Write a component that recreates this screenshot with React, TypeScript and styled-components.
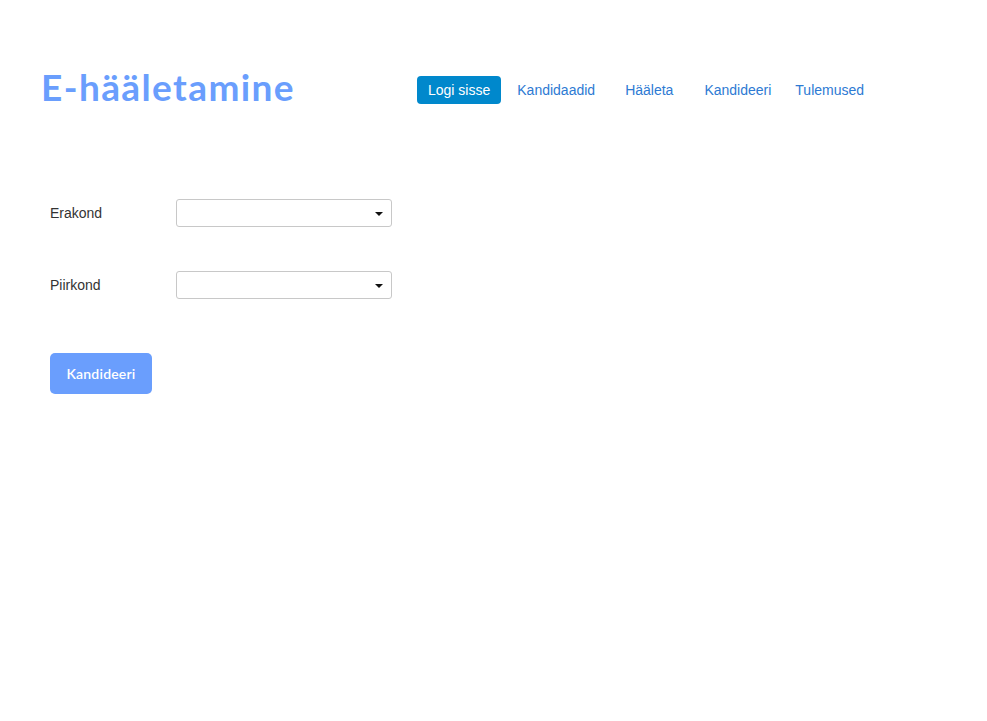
import React from 'react';
import styled, {createGlobalStyle} from 'styled-components';

const GlobalStyle = createGlobalStyle`
    html, body {
        margin: 0;
        padding: 0;
        background: #fff;
    }
    body {
        font-family: 'Liberation Sans', Arial, sans-serif;
        font-size: 14px;
        color: #333;
    }
`;

const Page = styled.div`
    width: 987px;
    min-height: 721px;
`;

const Header = styled.header`
    display: flex;
    align-items: center;
    padding: 62px 0 0 41px;
    height: 52px;
`;

const Title = styled.h1`
    margin: -3px 0 0;
    width: 376px;
    font-family: Lato, 'Open Sans', sans-serif;
    font-weight: 700;
    font-size: 37px;
    letter-spacing: 1.4px;
    color: #6a9efd;
`;

const Nav = styled.nav`
    display: flex;
    align-items: center;
    padding-top: 3px;
`;

const NavLink = styled.a<{$active?: boolean; $gap?: number}>`
    display: block;
    margin-left: ${(p) => p.$gap || 0}px;
    padding: ${(p) => (p.$active ? '0 11px' : '0')};
    line-height: 28px;
    border-radius: 4px;
    font-size: 14px;
    text-decoration: none;
    cursor: pointer;
    color: ${(p) => (p.$active ? '#fff' : '#2d7ad3')};
    background: ${(p) => (p.$active ? '#0088cc' : 'transparent')};
`;

const Form = styled.form`
    display: flex;
    flex-direction: column;
    padding: 85px 0 0 50px;
`;

const Row = styled.div`
    display: flex;
    align-items: center;
    height: 28px;
    margin-bottom: 44px;
`;

const Label = styled.label`
    width: 126px;
    font-size: 14px;
    color: #333;
`;

const Select = styled.div`
    position: relative;
    box-sizing: border-box;
    width: 216px;
    height: 28px;
    border: 1px solid #c8c8c8;
    border-radius: 3px;
    background: #fff;
`;

const Caret = styled.span`
    position: absolute;
    right: 8px;
    top: 12px;
    width: 0;
    height: 0;
    border-left: 4px solid transparent;
    border-right: 4px solid transparent;
    border-top: 4px solid #111;
`;

const Button = styled.button`
    align-self: flex-start;
    margin-top: 10px;
    width: 102px;
    height: 41px;
    border: none;
    border-radius: 5px;
    background: #6a9efd;
    color: #fff;
    font-family: Lato, 'Open Sans', sans-serif;
    font-weight: 600;
    font-size: 14px;
    letter-spacing: 0.2px;
    cursor: pointer;
`;

const navItems = [
    {label: 'Logi sisse', active: true, gap: 0},
    {label: 'Kandidaadid', gap: 16},
    {label: 'Hääleta', gap: 30},
    {label: 'Kandideeri', gap: 31},
    {label: 'Tulemused', gap: 24},
];

const fields = ['Erakond', 'Piirkond'];

const App = () => {
    return (
        <Page>
            <GlobalStyle/>
            <Header>
                <Title>{'E-hääletamine'}</Title>
                <Nav>
                    {navItems.map((item) => (
                        <NavLink
                            key={item.label}
                            $active={item.active}
                            $gap={item.gap}
                        >
                            {item.label}
                        </NavLink>
                    ))}
                </Nav>
            </Header>
            <Form onSubmit={(e) => e.preventDefault()}>
                {fields.map((f) => (
                    <Row key={f}>
                        <Label>{f}</Label>
                        <Select>
                            <Caret/>
                        </Select>
                    </Row>
                ))}
                <Button type='submit'>{'Kandideeri'}</Button>
            </Form>
        </Page>
    );
};

export default App;
